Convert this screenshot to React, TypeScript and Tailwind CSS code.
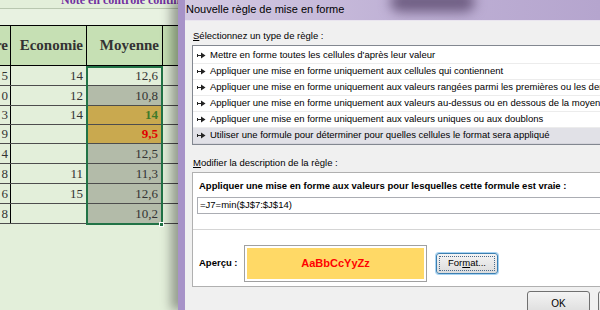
import React from "react";

type Kind = "active" | "gray" | "max" | "min";

const rows: { c: string; d: string; m: string; kind: Kind; h: string }[] = [
  { c: "5", d: "14", m: "12,6", kind: "active", h: "h-[20px]" },
  { c: "0", d: "12", m: "10,8", kind: "gray", h: "h-[20px]" },
  { c: "3", d: "14", m: "14", kind: "max", h: "h-[19px]" },
  { c: "9", d: "", m: "9,5", kind: "min", h: "h-[19px]" },
  { c: "4", d: "", m: "12,5", kind: "gray", h: "h-[20px]" },
  { c: "8", d: "11", m: "11,3", kind: "gray", h: "h-[20px]" },
  { c: "6", d: "15", m: "12,6", kind: "gray", h: "h-[20px]" },
  { c: "8", d: "", m: "10,2", kind: "gray", h: "h-[20px]" },
];

const cellBg: Record<Kind, string> = {
  active: "bg-[#e3efda]",
  gray: "bg-[#b3bba9]",
  max: "bg-[#c9a94f]",
  min: "bg-[#c9a94f]",
};

const cellText: Record<Kind, string> = {
  active: "text-[#333]",
  gray: "text-[#333]",
  max: "text-[#3f7a2a] font-bold",
  min: "text-[#e00000] font-bold",
};

const ruleTypes = [
  "Mettre en forme toutes les cellules d'après leur valeur",
  "Appliquer une mise en forme uniquement aux cellules qui contiennent",
  "Appliquer une mise en forme uniquement aux valeurs rangées parmi les premières ou les dernières valeurs",
  "Appliquer une mise en forme uniquement aux valeurs au-dessus ou en dessous de la moyenne",
  "Appliquer une mise en forme uniquement aux valeurs uniques ou aux doublons",
  "Utiliser une formule pour déterminer pour quelles cellules le format sera appliqué",
];

function RuleArrow() {
  return (
    <svg width="9" height="7" viewBox="0 0 9 7" className="flex-none">
      <rect x="0" y="2" width="1" height="3" fill="#222" />
      <rect x="1" y="3" width="3" height="1" fill="#222" />
      <polygon points="4,0.5 8.5,3.5 4,6.5" fill="#222" />
    </svg>
  );
}

function Sheet() {
  return (
    <div className="relative w-[178px] flex-none overflow-hidden bg-[#e3efda] font-['Liberation_Serif','DejaVu_Serif',serif]">
      <div className="h-[9px] overflow-hidden border-b border-[#b9c7b0]">
        <div className="-mt-[7px] whitespace-nowrap pl-[61px] text-[12px] font-bold leading-[14px] text-[#7030a0]">
          Note en contrôle continu
        </div>
      </div>
      <div className="h-[17px] border-b border-black bg-[#e8f2e1]" />
      <div className="flex h-[40px] border-b border-black bg-[#c6e0b4] text-[15px] font-bold text-[#333]">
        <div className="flex w-[11px] flex-none items-center justify-end overflow-hidden border-r border-black pr-[2px]">
          <span className="whitespace-nowrap">Histoire</span>
        </div>
        <div className="flex w-[76px] flex-none items-center justify-end border-r border-black pr-[3px]">Economie</div>
        <div className="flex w-[76px] flex-none items-center justify-end border-r border-black pr-[3px]">Moyenne</div>
        <div className="flex-1" />
      </div>
      {rows.map((r, i) => (
        <div key={i} className={`flex ${r.h} border-b border-[#4d4d4d] text-[13px] text-[#333]`}>
          <div className="flex w-[11px] flex-none items-center justify-end overflow-hidden border-r border-black pr-[2px]">{r.c}</div>
          <div className="flex w-[76px] flex-none items-center justify-end border-r border-black pr-[3px]">{r.d}</div>
          <div className={`flex w-[76px] flex-none items-center justify-end border-r border-black pr-[4px] ${cellBg[r.kind]} ${cellText[r.kind]}`}>
            {r.m}
          </div>
          <div className="flex-1" />
        </div>
      ))}
      <div className="pointer-events-none absolute left-[86px] top-[66px] h-[159px] w-[77px] border-2 border-[#217346]" />
      <div className="absolute left-[159px] top-[222px] h-[5px] w-[5px] border border-white bg-[#217346]" />
    </div>
  );
}

function Dialog() {
  return (
    <div className="relative z-10 flex w-[422px] flex-none flex-col border-l-[7px] border-[#a793c8] shadow-[-7px_0_10px_rgba(0,0,0,0.35)] font-['Liberation_Sans',Arial,sans-serif] text-black">
      <div className="relative flex h-[20px] items-center overflow-hidden bg-gradient-to-r from-[#d4cae2] via-[#c0b2d6] to-[#b5a5ce]">
        <div className="absolute left-[205px] top-[-8px] h-[20px] w-[85px] rounded-full bg-[#6f5e83] blur-[6px]" />
        <span className="relative -mt-[2px] pl-[1px] text-[11px] leading-[14px]">Nouvelle règle de mise en forme</span>
      </div>
      <div className="flex-1 overflow-hidden border-t border-[#e9e5ef] bg-[#f0f0f0] pl-[7px] text-[9.5px]">
        <div className="mt-[9px] pl-[1px] leading-[12px]">
          <span className="underline">S</span>électionnez un type de règle :
        </div>
        <div className="-mr-[30px] mt-[3px] border border-[#828790] bg-white pt-[2px]">
          {ruleTypes.map((t, i) => (
            <div
              key={i}
              className={`flex h-[16px] items-center gap-[4px] whitespace-nowrap border-b pl-[4px] ${
                i === 5 ? "border-[#d5d5dc] bg-[#e1e1e7]" : "border-[#ececec]"
              }`}
            >
              <RuleArrow />
              <span>{t}</span>
            </div>
          ))}
        </div>
        <div className="mt-[12px] pl-[1px] leading-[12px]">
          <span className="underline">M</span>odifier la description de la règle :
        </div>
        <div className="-mr-[30px] mt-[3px] border border-[#b0b0b0] bg-white pb-[4px]">
          <div className="mt-[7px] whitespace-nowrap pl-[6px] font-bold leading-[12px]">
            Appliquer une mise en forme aux valeurs pour lesquelles cette formule est vraie :
          </div>
          <div className="ml-[4px] mt-[5px] flex h-[17px] items-center border border-[#abadb3] pl-[2px]">
            =J7=min($J$7:$J$14)
          </div>
          <div className="mt-[15px] border-t border-[#d5d5d5]" />
          <div className="mt-[15px] flex items-center pl-[6px]">
            <span className="w-[45px] flex-none font-bold">Aperçu :</span>
            <div className="h-[37px] w-[183px] flex-none border border-[#a0a0a0] p-[2px]">
              <div className="flex h-full items-center justify-center bg-[#ffd966] text-[11px] font-bold text-[#ff0000]">
                AaBbCcYyZz
              </div>
            </div>
            <button className="ml-[9px] h-[21px] w-[62px] flex-none rounded-[3px] border border-[#3c7fb1] bg-gradient-to-b from-[#f4f4f4] to-[#dcdcdc] p-[2px] shadow-[0_0_0_1px_#a8d4f3]">
              <div className="flex h-full items-center justify-center border border-dotted border-[#4a6a8a]">
                For<span className="underline">m</span>at...
              </div>
            </button>
          </div>
        </div>
        <div className="mt-[4px] flex">
          <button className="ml-[335px] h-[24px] w-[63px] flex-none rounded-[3px] border border-[#707070] bg-gradient-to-b from-[#f4f4f4] to-[#dcdcdc] text-[10px]">
            OK
          </button>
          <button className="ml-[8px] h-[24px] w-[63px] flex-none rounded-[3px] border border-[#707070] bg-gradient-to-b from-[#f4f4f4] to-[#dcdcdc]" />
        </div>
      </div>
    </div>
  );
}

export default function App() {
  return (
    <div className="flex h-[310px] w-[600px] overflow-hidden bg-[#e3efda]">
      <Sheet />
      <Dialog />
    </div>
  );
}
